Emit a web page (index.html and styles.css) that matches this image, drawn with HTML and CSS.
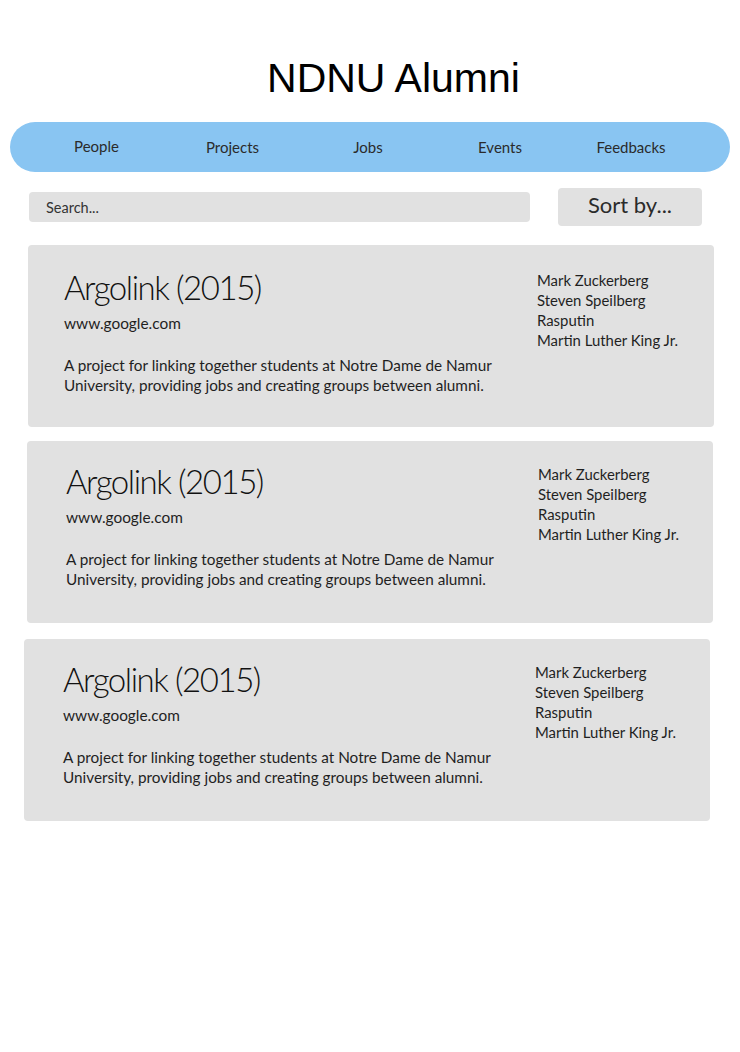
FILE: index.html
```html
<!DOCTYPE html>
<html lang="en">
<head>
<meta charset="utf-8">
<title>NDNU Alumni</title>
<link rel="stylesheet" href="styles.css">
</head>
<body>
<div class="page">
  <header class="masthead">
    <h1 class="site-title">NDNU Alumni</h1>
  </header>

  <nav class="nav">
    <a class="nav-item nav-people" href="#">People</a>
    <a class="nav-item nav-projects" href="#">Projects</a>
    <a class="nav-item" href="#">Jobs</a>
    <a class="nav-item" href="#">Events</a>
    <a class="nav-item" href="#">Feedbacks</a>
  </nav>

  <div class="toolbar">
    <div class="search">Search...</div>
    <div class="sort">Sort by...</div>
  </div>

  <main class="projects">
    <article class="card">
      <div class="card-main">
        <h2 class="card-title">Argolink (2015)</h2>
        <div class="card-url">www.google.com</div>
        <p class="card-desc">A project for linking together students at Notre Dame de Namur University, providing jobs and creating groups between alumni.</p>
      </div>
      <ul class="members">
        <li>Mark Zuckerberg</li>
        <li>Steven Speilberg</li>
        <li>Rasputin</li>
        <li>Martin Luther King Jr.</li>
      </ul>
    </article>

    <article class="card">
      <div class="card-main">
        <h2 class="card-title">Argolink (2015)</h2>
        <div class="card-url">www.google.com</div>
        <p class="card-desc">A project for linking together students at Notre Dame de Namur University, providing jobs and creating groups between alumni.</p>
      </div>
      <ul class="members">
        <li>Mark Zuckerberg</li>
        <li>Steven Speilberg</li>
        <li>Rasputin</li>
        <li>Martin Luther King Jr.</li>
      </ul>
    </article>

    <article class="card">
      <div class="card-main">
        <h2 class="card-title">Argolink (2015)</h2>
        <div class="card-url">www.google.com</div>
        <p class="card-desc">A project for linking together students at Notre Dame de Namur University, providing jobs and creating groups between alumni.</p>
      </div>
      <ul class="members">
        <li>Mark Zuckerberg</li>
        <li>Steven Speilberg</li>
        <li>Rasputin</li>
        <li>Martin Luther King Jr.</li>
      </ul>
    </article>
  </main>
</div>
</body>
</html>
```

FILE: styles.css
```css
* {
  box-sizing: border-box;
}

html, body {
  margin: 0;
  padding: 0;
  background: #ffffff;
}

body {
  font-family: "Lato", "Open Sans", sans-serif;
  color: #1f1f1f;
}

.page {
  width: 740px;
  min-height: 1052px;
}

/* Header */
.masthead {
  padding-top: 55px;
  padding-left: 47px;
  text-align: center;
}

.site-title {
  margin: 0;
  font-family: "Liberation Sans", Arial, sans-serif;
  font-weight: 400;
  font-size: 41px;
  line-height: 47px;
  color: #000000;
}

/* Navigation */
.nav {
  margin: 20px 10px 0;
  height: 50px;
  border-radius: 25px;
  background: #89c5f2;
  padding-left: 19px;
  display: grid;
  grid-template-columns: 135px 137px 134px 130px 132px;
  align-items: center;
}

.nav-item {
  text-align: center;
  font-size: 15px;
  color: #2b2b2b;
  text-decoration: none;
  line-height: 20px;
}

.nav-people {
  margin-top: -3px;
}

.nav-projects {
  margin-top: -1px;
}

/* Toolbar */
.toolbar {
  display: flex;
  align-items: center;
  margin-top: 16px;
  padding-left: 29px;
  height: 38px;
}

.search {
  width: 501px;
  height: 30px;
  background: #e1e1e1;
  border-radius: 4px;
  padding-left: 17px;
  display: flex;
  align-items: center;
  font-size: 14.5px;
  color: #333333;
}

.sort {
  margin-left: 28px;
  width: 144px;
  height: 38px;
  background: #e1e1e1;
  border-radius: 4px;
  display: flex;
  align-items: center;
  justify-content: center;
  font-size: 22px;
  color: #2b2b2b;
  padding-bottom: 6px;
}

/* Project cards */
.projects {
  display: flex;
  flex-direction: column;
  gap: 14px;
  margin-top: 19px;
}

.card {
  width: 686px;
  height: 182px;
  background: #e1e1e1;
  border-radius: 4px;
  display: flex;
  padding: 20px 0 0 39px;
}

.card:nth-child(1) {
  margin-left: 28px;
  padding-top: 22px;
  padding-left: 36px;
}

.card:nth-child(2) {
  margin-left: 27px;
}

.card:nth-child(3) {
  margin-left: 24px;
  margin-top: 2px;
}

.card-main {
  width: 472px;
}

.card:nth-child(1) .card-main {
  width: 473px;
}

.card-title {
  margin: 0;
  font-weight: 300;
  font-size: 33px;
  line-height: 40px;
  letter-spacing: -1.45px;
  color: #111111;
}

.card-url {
  margin-top: 6px;
  font-size: 15.4px;
  line-height: 20px;
}

.card-desc {
  margin: 22px 0 0;
  font-size: 15.3px;
  line-height: 20px;
}

.members {
  list-style: none;
  margin: 3px 0 0;
  padding: 0;
  font-size: 14.9px;
  line-height: 20px;
}
```
